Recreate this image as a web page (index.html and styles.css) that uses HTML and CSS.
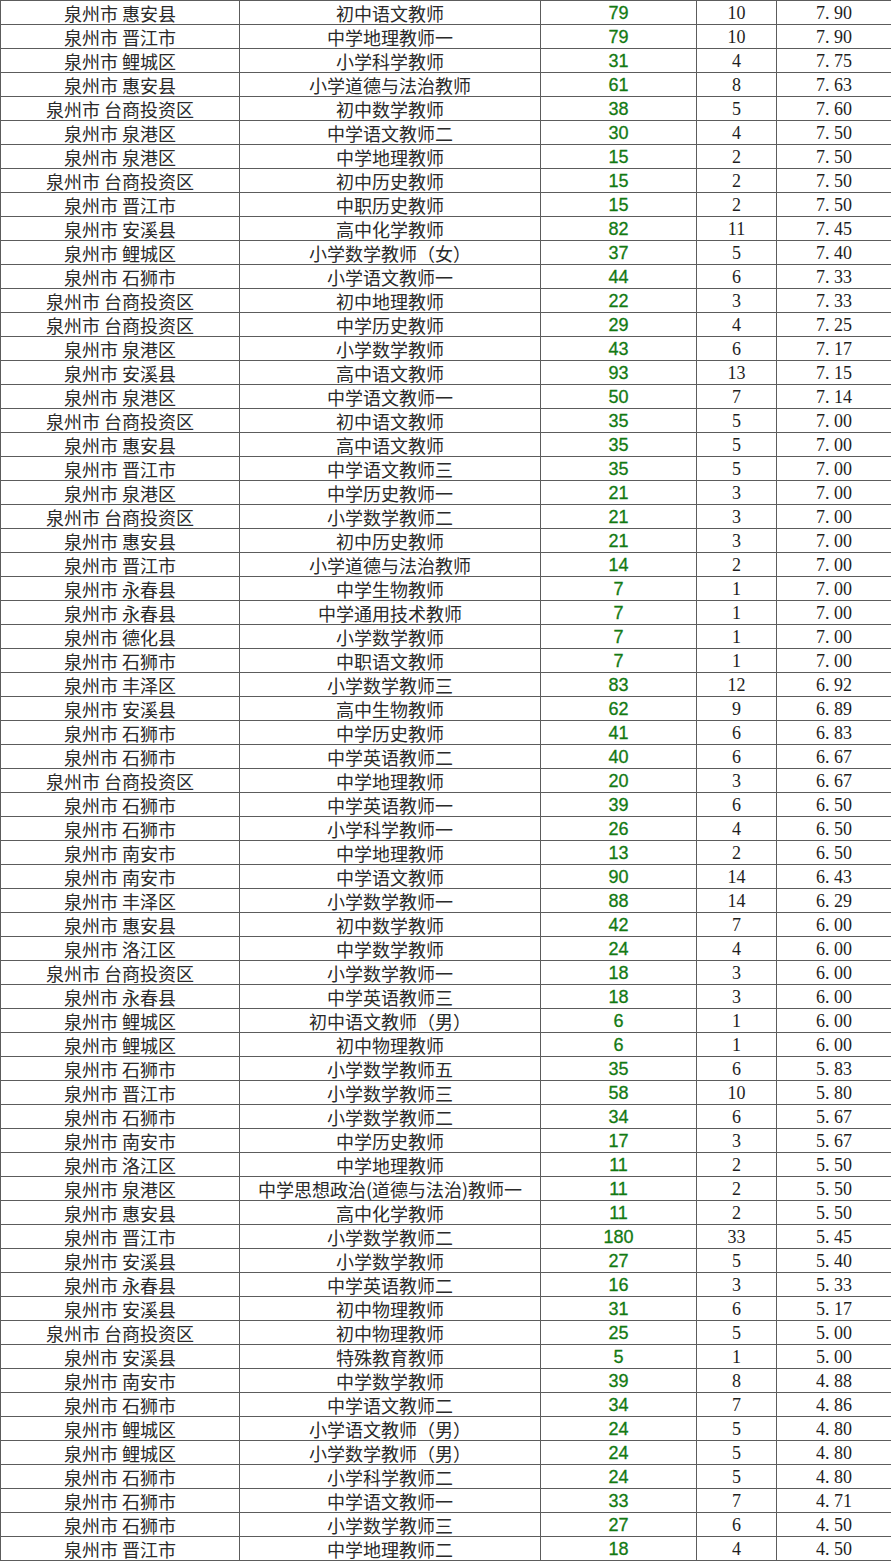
FILE: index.html
```html
<!DOCTYPE html>
<html lang="zh-CN">
<head>
<meta charset="utf-8">
<title>泉州市 教师岗位报名比</title>
<link rel="stylesheet" href="styles.css">
</head>
<body>
<table class="ratio-table">
<colgroup>
<col class="c-area"><col class="c-post"><col class="c-apply"><col class="c-quota"><col class="c-ratio">
</colgroup>
<tbody>
<tr><td>泉州市 惠安县</td><td>初中语文教师</td><td class="num">79</td><td class="cnt">10</td><td class="rt">7<span class="pt">.</span>90</td></tr>
<tr><td>泉州市 晋江市</td><td>中学地理教师一</td><td class="num">79</td><td class="cnt">10</td><td class="rt">7<span class="pt">.</span>90</td></tr>
<tr><td>泉州市 鲤城区</td><td>小学科学教师</td><td class="num">31</td><td class="cnt">4</td><td class="rt">7<span class="pt">.</span>75</td></tr>
<tr><td>泉州市 惠安县</td><td>小学道德与法治教师</td><td class="num">61</td><td class="cnt">8</td><td class="rt">7<span class="pt">.</span>63</td></tr>
<tr><td>泉州市 台商投资区</td><td>初中数学教师</td><td class="num">38</td><td class="cnt">5</td><td class="rt">7<span class="pt">.</span>60</td></tr>
<tr><td>泉州市 泉港区</td><td>中学语文教师二</td><td class="num">30</td><td class="cnt">4</td><td class="rt">7<span class="pt">.</span>50</td></tr>
<tr><td>泉州市 泉港区</td><td>中学地理教师</td><td class="num">15</td><td class="cnt">2</td><td class="rt">7<span class="pt">.</span>50</td></tr>
<tr><td>泉州市 台商投资区</td><td>初中历史教师</td><td class="num">15</td><td class="cnt">2</td><td class="rt">7<span class="pt">.</span>50</td></tr>
<tr><td>泉州市 晋江市</td><td>中职历史教师</td><td class="num">15</td><td class="cnt">2</td><td class="rt">7<span class="pt">.</span>50</td></tr>
<tr><td>泉州市 安溪县</td><td>高中化学教师</td><td class="num">82</td><td class="cnt">11</td><td class="rt">7<span class="pt">.</span>45</td></tr>
<tr><td>泉州市 鲤城区</td><td>小学数学教师（女）</td><td class="num">37</td><td class="cnt">5</td><td class="rt">7<span class="pt">.</span>40</td></tr>
<tr><td>泉州市 石狮市</td><td>小学语文教师一</td><td class="num">44</td><td class="cnt">6</td><td class="rt">7<span class="pt">.</span>33</td></tr>
<tr><td>泉州市 台商投资区</td><td>初中地理教师</td><td class="num">22</td><td class="cnt">3</td><td class="rt">7<span class="pt">.</span>33</td></tr>
<tr><td>泉州市 台商投资区</td><td>中学历史教师</td><td class="num">29</td><td class="cnt">4</td><td class="rt">7<span class="pt">.</span>25</td></tr>
<tr><td>泉州市 泉港区</td><td>小学数学教师</td><td class="num">43</td><td class="cnt">6</td><td class="rt">7<span class="pt">.</span>17</td></tr>
<tr><td>泉州市 安溪县</td><td>高中语文教师</td><td class="num">93</td><td class="cnt">13</td><td class="rt">7<span class="pt">.</span>15</td></tr>
<tr><td>泉州市 泉港区</td><td>中学语文教师一</td><td class="num">50</td><td class="cnt">7</td><td class="rt">7<span class="pt">.</span>14</td></tr>
<tr><td>泉州市 台商投资区</td><td>初中语文教师</td><td class="num">35</td><td class="cnt">5</td><td class="rt">7<span class="pt">.</span>00</td></tr>
<tr><td>泉州市 惠安县</td><td>高中语文教师</td><td class="num">35</td><td class="cnt">5</td><td class="rt">7<span class="pt">.</span>00</td></tr>
<tr><td>泉州市 晋江市</td><td>中学语文教师三</td><td class="num">35</td><td class="cnt">5</td><td class="rt">7<span class="pt">.</span>00</td></tr>
<tr><td>泉州市 泉港区</td><td>中学历史教师一</td><td class="num">21</td><td class="cnt">3</td><td class="rt">7<span class="pt">.</span>00</td></tr>
<tr><td>泉州市 台商投资区</td><td>小学数学教师二</td><td class="num">21</td><td class="cnt">3</td><td class="rt">7<span class="pt">.</span>00</td></tr>
<tr><td>泉州市 惠安县</td><td>初中历史教师</td><td class="num">21</td><td class="cnt">3</td><td class="rt">7<span class="pt">.</span>00</td></tr>
<tr><td>泉州市 晋江市</td><td>小学道德与法治教师</td><td class="num">14</td><td class="cnt">2</td><td class="rt">7<span class="pt">.</span>00</td></tr>
<tr><td>泉州市 永春县</td><td>中学生物教师</td><td class="num">7</td><td class="cnt">1</td><td class="rt">7<span class="pt">.</span>00</td></tr>
<tr><td>泉州市 永春县</td><td>中学通用技术教师</td><td class="num">7</td><td class="cnt">1</td><td class="rt">7<span class="pt">.</span>00</td></tr>
<tr><td>泉州市 德化县</td><td>小学数学教师</td><td class="num">7</td><td class="cnt">1</td><td class="rt">7<span class="pt">.</span>00</td></tr>
<tr><td>泉州市 石狮市</td><td>中职语文教师</td><td class="num">7</td><td class="cnt">1</td><td class="rt">7<span class="pt">.</span>00</td></tr>
<tr><td>泉州市 丰泽区</td><td>小学数学教师三</td><td class="num">83</td><td class="cnt">12</td><td class="rt">6<span class="pt">.</span>92</td></tr>
<tr><td>泉州市 安溪县</td><td>高中生物教师</td><td class="num">62</td><td class="cnt">9</td><td class="rt">6<span class="pt">.</span>89</td></tr>
<tr><td>泉州市 石狮市</td><td>中学历史教师</td><td class="num">41</td><td class="cnt">6</td><td class="rt">6<span class="pt">.</span>83</td></tr>
<tr><td>泉州市 石狮市</td><td>中学英语教师二</td><td class="num">40</td><td class="cnt">6</td><td class="rt">6<span class="pt">.</span>67</td></tr>
<tr><td>泉州市 台商投资区</td><td>中学地理教师</td><td class="num">20</td><td class="cnt">3</td><td class="rt">6<span class="pt">.</span>67</td></tr>
<tr><td>泉州市 石狮市</td><td>中学英语教师一</td><td class="num">39</td><td class="cnt">6</td><td class="rt">6<span class="pt">.</span>50</td></tr>
<tr><td>泉州市 石狮市</td><td>小学科学教师一</td><td class="num">26</td><td class="cnt">4</td><td class="rt">6<span class="pt">.</span>50</td></tr>
<tr><td>泉州市 南安市</td><td>中学地理教师</td><td class="num">13</td><td class="cnt">2</td><td class="rt">6<span class="pt">.</span>50</td></tr>
<tr><td>泉州市 南安市</td><td>中学语文教师</td><td class="num">90</td><td class="cnt">14</td><td class="rt">6<span class="pt">.</span>43</td></tr>
<tr><td>泉州市 丰泽区</td><td>小学数学教师一</td><td class="num">88</td><td class="cnt">14</td><td class="rt">6<span class="pt">.</span>29</td></tr>
<tr><td>泉州市 惠安县</td><td>初中数学教师</td><td class="num">42</td><td class="cnt">7</td><td class="rt">6<span class="pt">.</span>00</td></tr>
<tr><td>泉州市 洛江区</td><td>中学数学教师</td><td class="num">24</td><td class="cnt">4</td><td class="rt">6<span class="pt">.</span>00</td></tr>
<tr><td>泉州市 台商投资区</td><td>小学数学教师一</td><td class="num">18</td><td class="cnt">3</td><td class="rt">6<span class="pt">.</span>00</td></tr>
<tr><td>泉州市 永春县</td><td>中学英语教师三</td><td class="num">18</td><td class="cnt">3</td><td class="rt">6<span class="pt">.</span>00</td></tr>
<tr><td>泉州市 鲤城区</td><td>初中语文教师（男）</td><td class="num">6</td><td class="cnt">1</td><td class="rt">6<span class="pt">.</span>00</td></tr>
<tr><td>泉州市 鲤城区</td><td>初中物理教师</td><td class="num">6</td><td class="cnt">1</td><td class="rt">6<span class="pt">.</span>00</td></tr>
<tr><td>泉州市 石狮市</td><td>小学数学教师五</td><td class="num">35</td><td class="cnt">6</td><td class="rt">5<span class="pt">.</span>83</td></tr>
<tr><td>泉州市 晋江市</td><td>小学数学教师三</td><td class="num">58</td><td class="cnt">10</td><td class="rt">5<span class="pt">.</span>80</td></tr>
<tr><td>泉州市 石狮市</td><td>小学数学教师二</td><td class="num">34</td><td class="cnt">6</td><td class="rt">5<span class="pt">.</span>67</td></tr>
<tr><td>泉州市 南安市</td><td>中学历史教师</td><td class="num">17</td><td class="cnt">3</td><td class="rt">5<span class="pt">.</span>67</td></tr>
<tr><td>泉州市 洛江区</td><td>中学地理教师</td><td class="num">11</td><td class="cnt">2</td><td class="rt">5<span class="pt">.</span>50</td></tr>
<tr><td>泉州市 泉港区</td><td>中学思想政治(道德与法治)教师一</td><td class="num">11</td><td class="cnt">2</td><td class="rt">5<span class="pt">.</span>50</td></tr>
<tr><td>泉州市 惠安县</td><td>高中化学教师</td><td class="num">11</td><td class="cnt">2</td><td class="rt">5<span class="pt">.</span>50</td></tr>
<tr><td>泉州市 晋江市</td><td>小学数学教师二</td><td class="num">180</td><td class="cnt">33</td><td class="rt">5<span class="pt">.</span>45</td></tr>
<tr><td>泉州市 安溪县</td><td>小学数学教师</td><td class="num">27</td><td class="cnt">5</td><td class="rt">5<span class="pt">.</span>40</td></tr>
<tr><td>泉州市 永春县</td><td>中学英语教师二</td><td class="num">16</td><td class="cnt">3</td><td class="rt">5<span class="pt">.</span>33</td></tr>
<tr><td>泉州市 安溪县</td><td>初中物理教师</td><td class="num">31</td><td class="cnt">6</td><td class="rt">5<span class="pt">.</span>17</td></tr>
<tr><td>泉州市 台商投资区</td><td>初中物理教师</td><td class="num">25</td><td class="cnt">5</td><td class="rt">5<span class="pt">.</span>00</td></tr>
<tr><td>泉州市 安溪县</td><td>特殊教育教师</td><td class="num">5</td><td class="cnt">1</td><td class="rt">5<span class="pt">.</span>00</td></tr>
<tr><td>泉州市 南安市</td><td>中学数学教师</td><td class="num">39</td><td class="cnt">8</td><td class="rt">4<span class="pt">.</span>88</td></tr>
<tr><td>泉州市 石狮市</td><td>中学语文教师二</td><td class="num">34</td><td class="cnt">7</td><td class="rt">4<span class="pt">.</span>86</td></tr>
<tr><td>泉州市 鲤城区</td><td>小学语文教师（男）</td><td class="num">24</td><td class="cnt">5</td><td class="rt">4<span class="pt">.</span>80</td></tr>
<tr><td>泉州市 鲤城区</td><td>小学数学教师（男）</td><td class="num">24</td><td class="cnt">5</td><td class="rt">4<span class="pt">.</span>80</td></tr>
<tr><td>泉州市 石狮市</td><td>小学科学教师二</td><td class="num">24</td><td class="cnt">5</td><td class="rt">4<span class="pt">.</span>80</td></tr>
<tr><td>泉州市 石狮市</td><td>中学语文教师一</td><td class="num">33</td><td class="cnt">7</td><td class="rt">4<span class="pt">.</span>71</td></tr>
<tr><td>泉州市 石狮市</td><td>小学数学教师三</td><td class="num">27</td><td class="cnt">6</td><td class="rt">4<span class="pt">.</span>50</td></tr>
<tr><td>泉州市 晋江市</td><td>中学地理教师二</td><td class="num">18</td><td class="cnt">4</td><td class="rt">4<span class="pt">.</span>50</td></tr>
</tbody>
</table>
</body>
</html>
```

FILE: styles.css
```css
html, body {
  margin: 0;
  padding: 0;
  background: #ffffff;
}

.ratio-table {
  border-collapse: collapse;
  table-layout: fixed;
  width: 891px;
  font-family: "Liberation Serif", "Noto Sans CJK SC", serif;
  font-size: 18px;
  color: #222222;
}

.c-area { width: 239px; }
.c-post { width: 301px; }
.c-apply { width: 156px; }
.c-quota { width: 80px; }
.c-ratio { width: 115px; }

.ratio-table td {
  border: 1px solid #5c5c5c;
  height: 23px;
  padding: 0;
  text-align: center;
  vertical-align: middle;
  line-height: 22px;
  white-space: nowrap;
  overflow: hidden;
}

.ratio-table td:nth-child(1),
.ratio-table td:nth-child(2) {
  font-family: "Noto Sans CJK SC", sans-serif;
  color: #2a2a2a;
}

.ratio-table td.num {
  font-family: "Liberation Sans", Arial, sans-serif;
  color: #137a13;
  -webkit-text-stroke: 0.3px #137a13;
}

.ratio-table td.cnt,
.ratio-table td.rt {
  font-family: "Liberation Serif", serif;
  color: #1e1e1e;
}

.pt {
  display: inline-block;
  width: 0.5em;
  text-align: left;
}
```
